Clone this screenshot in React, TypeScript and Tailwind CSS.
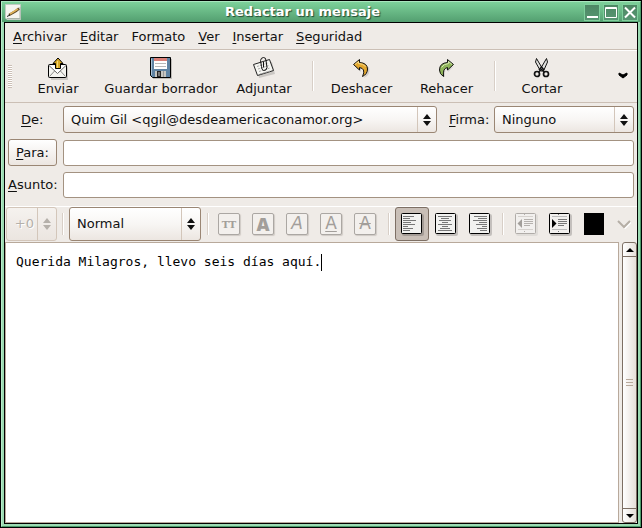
import type { ReactNode } from "react";

type IconProps = { children: ReactNode; w?: number; h?: number };

function Svg({ children, w = 24, h = 24 }: IconProps) {
  return (
    <svg width={w} height={h} viewBox={`0 0 ${w} ${h}`} fill="none" aria-hidden="true" className="shrink-0">
      {children}
    </svg>
  );
}

const SendIcon = () => (
  <Svg>
    <path d="M5 9H21L22 11V23H5Z" fill="#000" opacity=".15" />
    <rect x="2.500" y="7.500" width="18" height="13" rx="1" fill="#f4f4f0" stroke="#000" />
    <path d="M3.500 19.500L9 13.500M19.500 19.500L14 13.500" stroke="#8a8a88" />
    <path d="M3 8.500L11.500 16.500L20 8.500" stroke="#666" fill="#fff" />
    <path d="M12 1L17 6.500H14.500V11.500H9.500V6.500H7Z" fill="#d9a825" stroke="#000" />
    <path d="M11.500 4V11" stroke="#f5d873" />
  </Svg>
);

const FloppyIcon = () => (
  <Svg>
    <path d="M3 2H23V22H4Z" fill="#000" opacity=".2" />
    <path d="M1.500 .500H21.500V20.500H3.500L1.500 18.500Z" fill="#5f83a3" stroke="#000" />
    <path d="M2.500 1.500V18" stroke="#a9c2d6" />
    <rect x="5" y="1" width="13" height="11" fill="#fff" />
    <rect x="5" y="1" width="13" height="3" fill="#d98078" />
    <path d="M6 6.500H17M6 9.500H17" stroke="#b8b8b8" />
    <rect x="6" y="14" width="11" height="6" fill="#c6c6c2" />
    <rect x="8.500" y="14.500" width="3" height="5" fill="#777" stroke="#262626" />
    <path d="M14.500 14V20" stroke="#999" />
  </Svg>
);

const AttachIcon = () => (
  <Svg>
    <path d="M5 9L20 5L23 17L7 21Z" fill="#000" opacity=".15" />
    <path d="M1.500 7.500L17.500 2.500L21.500 13.500L5.500 18.500Z" fill="#f6f6f2" stroke="#222" strokeLinejoin="round" />
    <path d="M5 9.500L16 6M6 12L17 8.500M7 14.500L18 11M8 17L18 14" stroke="#aaa" strokeDasharray="2 1" />
    <path d="M9.500 9.500L8.500 3.500Q9 .500 11.500 .500T14 3.500L15 10.500Q14.500 14 11.500 13.500Q9.500 13 9.500 9.500M11.500 5V10.500" stroke="#111" />
  </Svg>
);

const UndoIcon = () => (
  <Svg>
    <path d="M6 11L11 15V11Q18 11 14 21Q21 18 19 10" fill="#000" opacity=".12" />
    <path d="M3.500 7.500L9.500 2.500V5.500Q17.500 6 17.500 12Q17.500 17 12.500 19.500Q14.500 15.500 13.500 13Q12.500 11 9.500 10.500V13Z" fill="#e3a72e" stroke="#111" />
    <path d="M5 7.500L8.500 4.500V6.500Q13 6.500 15.500 9.500" stroke="#f9dc8b" />
  </Svg>
);

const RedoIcon = () => (
  <Svg>
    <path d="M19 9L13 15V11Q9 13 10 20Q7 20 6 16" fill="#000" opacity=".12" />
    <path d="M18.500 7.500L12.500 2.500V5.500Q4.500 6 4.500 13Q4.500 17 8.500 19.500Q8 15.500 9 13Q10 11 12.500 10.500V13Z" fill="#8fb55a" stroke="#111" />
    <path d="M17 7.500L13.500 4.500V6.500Q8.500 7 6.500 10.500" stroke="#d5e8b0" />
  </Svg>
);

const CutIcon = () => (
  <Svg>
    <path d="M6.500 1.500L5.500 5L10.500 14H13.500L17.500 5L16.500 1.500L11.500 10Z" fill="#e2e2e0" stroke="#111" />
    <path d="M9 13L11.500 10L14 13" stroke="#111" strokeWidth="1.500" />
    <circle cx="7" cy="17" r="2.500" stroke="#111" strokeWidth="1.700" />
    <circle cx="16" cy="17" r="2.500" stroke="#111" strokeWidth="1.700" />
    <path d="M8.500 15L11.500 12.500L14.500 15" stroke="#111" strokeWidth="1.500" />
  </Svg>
);

const ComposeIcon = () => (
  <Svg w={16} h={16}>
    <path d="M.500 .500H15.500V15.500H2L.500 14Z" fill="#f5f5f0" stroke="#c3cdc4" />
    <path d="M2 14.500H15M15 3V15" stroke="#aab5ab" />
    <path d="M4 11L11 7L14 4.500" stroke="#5a4522" strokeWidth="2.500" />
    <path d="M5 10L13 5" stroke="#dfb35a" strokeWidth="1.500" />
    <path d="M2 12.500L5 11" stroke="#222" />
  </Svg>
);

/** Pair of small triangles that marks a drop-down or a spinner. */
function UpDown({ color = "#111" }: { color?: string }) {
  return (
    <Svg w={8} h={12}>
      <path d="M0 5H8L4 0ZM0 7H8L4 12Z" fill={color} />
    </Svg>
  );
}

type SelectProps = { id: string; value: string; className: string; label?: string };

function Select({ id, value, className, label }: SelectProps) {
  return (
    <div className={`relative ${className}`}>
      <select
        id={id}
        aria-label={label}
        className="h-full w-full appearance-none rounded-[3px] border border-[#9a8674] bg-linear-to-b from-white via-[#f8f6f4] to-[#ece6e1] pr-6 pl-[7px] text-[13px] text-[#111] outline-none"
      >
        <option>{value}</option>
      </select>
      <span className="pointer-events-none absolute inset-y-px right-px flex w-[19px] items-center justify-center border-l border-[#d3c6ba]">
        <UpDown />
      </span>
    </div>
  );
}

const Separator = ({ className }: { className: string }) => (
  <span className={`w-[2px] shrink-0 border-r border-l border-r-white border-l-[#d8cfc7] ${className}`} />
);

/** Text with its keyboard shortcut letter underlined. */
function Mnemonic({ text, at = 0 }: { text: string; at?: number }) {
  return (
    <>
      {text.slice(0, at)}
      <span className="underline decoration-1 underline-offset-2">{text[at]}</span>
      {text.slice(at + 1)}
    </>
  );
}

const menus = [
  { text: "Archivar", at: 0 },
  { text: "Editar", at: 0 },
  { text: "Formato", at: 3 },
  { text: "Ver", at: 0 },
  { text: "Insertar", at: 0 },
  { text: "Seguridad", at: 0 },
];

function ToolButton({ label, icon, className }: { label: string; icon: ReactNode; className: string }) {
  return (
    <button type="button" className={`flex shrink-0 flex-col items-center whitespace-nowrap ${className}`}>
      {icon}
      <span className="leading-[16px]">{label}</span>
    </button>
  );
}

function StyleButton({ name, children, className }: { name: string; children: ReactNode; className: string }) {
  return (
    <button type="button" aria-label={name} className="flex h-[34px] w-[34px] items-center justify-center">
      <span
        className={`flex size-[22px] items-center justify-center rounded-[2px] border border-[#aba7a3] bg-[#f3f0ed] text-[#a29e9a] shadow-[1px_1px_1px_#cfcac5] ${className}`}
      >
        {children}
      </span>
    </button>
  );
}

const alignLines: Record<string, string> = {
  left: "M3 3.500H14M3 5.500H10M3 7.500H16M3 9.500H11M3 11.500H15M3 13.500H8M3 15.500H13M3 17.500H10",
  center: "M4 3.500H18M7 5.500H15M5 7.500H17M8 9.500H14M4 11.500H18M8 13.500H14M6 15.500H16M4 17.500H18",
  right: "M6 3.500H19M10 5.500H19M5 7.500H19M11 9.500H19M8 11.500H19M14 13.500H19M9 15.500H19M12 17.500H19",
};

function AlignButton({ name, kind, pressed = false }: { name: string; kind: string; pressed?: boolean }) {
  return (
    <button
      type="button"
      aria-label={name}
      aria-pressed={pressed}
      className={`flex h-[34px] w-[34px] items-center justify-center rounded-[3px] ${
        pressed ? "border border-[#7d6f64] bg-[#c9bfb7]" : ""
      }`}
    >
      <Svg w={24} h={24}>
        <rect x="2" y="2" width="22" height="22" rx="2" fill="#000" opacity=".18" />
        <rect x="1.500" y="1.500" width="20" height="20" rx="1" fill="#f2f2f0" stroke="#000" />
        <path transform="translate(0 1)" d={alignLines[kind]} stroke="#777" />
      </Svg>
    </button>
  );
}

function IndentButton({ name, disabled = false }: { name: string; disabled?: boolean }) {
  const line = disabled ? "#b5b1ad" : "#777";
  return (
    <button type="button" aria-label={name} disabled={disabled} className="flex h-[34px] w-[34px] items-center justify-center">
      <Svg w={24} h={24}>
        <rect x="2" y="2" width="22" height="22" rx="2" fill="#000" opacity={disabled ? 0.06 : 0.18} />
        <rect x="1.500" y="1.500" width="20" height="20" rx="1" fill="#f2f0ee" stroke={disabled ? "#b0aca8" : "#000"} />
        <path d="M4 4.500H19M4 17.500H19" stroke={disabled ? "#d6d2ce" : "#bbb"} />
        <path d="M10 7.500H19M10 9.500H19M10 11.500H19M10 13.500H16" stroke={line} />
        <path d={disabled ? "M8 7V16L3.500 11.500Z" : "M4 7V16L8.500 11.500Z"} fill={disabled ? "#a29e9a" : "#000"} />
        <path d="M10 2.500H11M10 19.500H11" stroke={line} />
      </Svg>
    </button>
  );
}

function WindowButton({ name, children }: { name: string; children: ReactNode }) {
  return (
    <button
      type="button"
      aria-label={name}
      className="flex h-[17px] w-[16px] items-center justify-center border border-[#7fcf9c] bg-linear-to-b from-[#4d8764] to-[#579672]"
    >
      <Svg w={14} h={15}>{children}</Svg>
    </button>
  );
}

const field = "h-[26px] min-w-0 flex-1 rounded-[3px] border border-[#a39281] bg-white px-2 outline-none";

export default function App() {
  return (
    <div className="h-screen border border-black font-['DejaVu_Sans','Bitstream_Vera_Sans',sans-serif] text-[13px] text-[#111]">
      <div className="flex h-full flex-col border border-t-[#a9e6be] border-r-[#4b9a69] border-b-[#4b9a69] border-l-[#b8ecca] bg-[#9bdab2]">
        <header className="flex h-[20px] shrink-0 items-center bg-linear-to-b from-[#7dd19a] to-[#539f70] pr-[2px] pl-[3px]">
          <ComposeIcon />
          <h1 className="flex-1 text-center text-[13px] leading-[18px] font-bold text-white [text-shadow:1px_1px_1px_#234a33]">
            Redactar un mensaje
          </h1>
          <div className="flex gap-[3px]">
            <WindowButton name="Minimizar">
              <path d="M2 12H13" stroke="#fff" strokeWidth="2" />
            </WindowButton>
            <WindowButton name="Maximizar">
              <path d="M1.500 2.500H12.500V12.500H1.500ZM1 3.500H13" stroke="#fff" />
            </WindowButton>
            <WindowButton name="Cerrar">
              <path d="M2 2.500L12 12.500M12 2.500L2 12.500" stroke="#fff" strokeWidth="2" />
            </WindowButton>
          </div>
        </header>

        <main className="mx-[2px] mb-[2px] flex min-h-0 flex-1 flex-col border border-black bg-[#efebe7]">
          <nav className="flex h-[27px] shrink-0 items-center gap-[13px] border-b border-[#cbbfb5] px-2 pt-px">
            {menus.map((m) => (
              <button key={m.text} type="button">
                <Mnemonic text={m.text} at={m.at} />
              </button>
            ))}
          </nav>

          <div role="toolbar" aria-label="Principal" className="flex h-[53px] shrink-0 items-start border-t border-b border-t-white border-b-[#cbbfb5] pt-[6px] pl-[3px]">
            <span className="mt-[8px] mr-[5px] h-[23px] w-[4px] shrink-0 bg-[repeating-linear-gradient(to_bottom,#cbbfb5_0_1px,#fff_1px_2px)]" />
            <ToolButton label="Enviar" icon={<SendIcon />} className="w-[82px]" />
            <ToolButton label="Guardar borrador" icon={<FloppyIcon />} className="w-[124px]" />
            <ToolButton label="Adjuntar" icon={<AttachIcon />} className="w-[82px]" />
            <Separator className="mt-[4px] mr-[5px] ml-[7px] h-[30px]" />
            <ToolButton label="Deshacer" icon={<UndoIcon />} className="w-[85px]" />
            <ToolButton label="Rehacer" icon={<RedoIcon />} className="w-[85px]" />
            <Separator className="mx-[5px] mt-[4px] h-[30px]" />
            <ToolButton label="Cortar" icon={<CutIcon />} className="w-[82px]" />
            <button type="button" aria-label="Más herramientas" className="mt-[14px] mr-[9px] ml-auto">
              <Svg w={10} h={8}>
                <path d="M1 2V4L5 7L9 4V2L5 4Z" fill="#000" stroke="#000" />
              </Svg>
            </button>
          </div>

          <div className="shrink-0 pr-[3px] pl-[3px]">
            <div className="flex items-center pt-[3px]">
              <label htmlFor="de" className="w-[55px] pl-[13px]">
                <Mnemonic text="De:" />
              </label>
              <Select id="de" value="Quim Gil <qgil@desdeamericaconamor.org>" className="h-[27px] min-w-0 flex-1" />
              <label htmlFor="firma" className="w-[57px] pl-[12px]">
                <Mnemonic text="Firma:" />
              </label>
              <Select id="firma" value="Ninguno" className="h-[27px] w-[140px]" />
            </div>
            <div className="flex items-center pt-[6px]">
              <button
                type="button"
                className="mr-[6px] h-[27px] w-[49px] rounded-[3px] border border-[#9a8674] bg-linear-to-b from-white to-[#ece6e1]"
              >
                <Mnemonic text="Para:" />
              </button>
              <input aria-label="Para" className={field} />
            </div>
            <div className="flex items-center pt-[6px]">
              <label htmlFor="asunto" className="w-[55px]">
                <Mnemonic text="Asunto:" />
              </label>
              <input id="asunto" className={field} />
            </div>
          </div>

          <div role="toolbar" aria-label="Formato" className="mt-2 flex h-[36px] shrink-0 items-start border-t border-white pl-px">
            <div className="flex h-[34px] w-[51px] shrink-0 rounded-[3px] border border-[#d3c6ba] bg-linear-to-b from-[#f5f2ef] to-[#ebe5e0] text-[#b5b0aa]">
              <span className="flex flex-1 items-center justify-end pr-[3px] [text-shadow:1px_1px_0_#fff]">+0</span>
              <span className="flex w-[19px] items-center justify-center border-l border-[#d3c6ba]">
                <UpDown color="#b5b0aa" />
              </span>
            </div>
            <Separator className="mx-[5px] mt-[6px] h-[22px]" />
            <Select id="estilo" label="Estilo de párrafo" value="Normal" className="h-[34px] w-[132px] shrink-0" />
            <Separator className="mt-[6px] mr-[3px] ml-[6px] h-[22px]" />
            <StyleButton name="Mecanografiado" className="font-['DejaVu_Serif',serif] text-[10px] font-bold">
              TT
            </StyleButton>
            <StyleButton name="Negrita" className="font-['Open_Sans','DejaVu_Sans',sans-serif] text-[18px] font-extrabold">
              A
            </StyleButton>
            <StyleButton name="Cursiva" className="text-[17px] italic">
              A
            </StyleButton>
            <StyleButton name="Subrayado" className="text-[17px] underline decoration-1 underline-offset-2">
              A
            </StyleButton>
            <StyleButton name="Tachado" className="text-[17px] line-through decoration-1">
              A
            </StyleButton>
            <Separator className="mt-[6px] mr-[5px] ml-[6px] h-[22px]" />
            <AlignButton name="Izquierda" kind="left" pressed />
            <AlignButton name="Centro" kind="center" />
            <AlignButton name="Derecha" kind="right" />
            <Separator className="mx-[5px] mt-[6px] h-[22px]" />
            <IndentButton name="Reducir sangría" disabled />
            <IndentButton name="Aumentar sangría" />
            <button type="button" aria-label="Color del texto" className="mt-[6px] ml-[7px] h-[22px] w-[20px] bg-black" />
            <button type="button" aria-label="Elegir color" className="mt-[12px] mr-[6px] ml-auto">
              <Svg w={14} h={10}>
                <path d="M2 3L8 9L14 3" stroke="#fff" strokeWidth="2" />
                <path d="M1 2L7 8L13 2" stroke="#b5aea5" strokeWidth="2" />
              </Svg>
            </button>
          </div>

          <div className="flex min-h-0 flex-1">
            <div
              role="textbox"
              aria-multiline="true"
              aria-label="Mensaje"
              className="flex-1 border border-[#b8a99b] bg-white px-[10px] pt-[11px] font-['DejaVu_Sans_Mono',monospace] text-[13px] leading-4 text-black"
            >
              <span className="inline-block h-[17px] border-r border-black">Querida Milagros, llevo seis días aquí.</span>
            </div>
            <div className="ml-[3px] flex w-[15px] flex-col rounded-[3px] border border-[#7d6f64] bg-linear-to-r from-white to-[#e6dfd9]">
              <button type="button" aria-label="Subir" className="flex h-[14px] items-center justify-center border-b border-[#7d6f64]">
                <Svg w={8} h={4}>
                  <path d="M0 4H8L4 0Z" fill="#000" />
                </Svg>
              </button>
              <div className="flex flex-1 flex-col items-center justify-center gap-[2px]">
                <span className="h-px w-[7px] bg-[#b8a99b]" />
                <span className="h-px w-[7px] bg-[#b8a99b]" />
                <span className="h-px w-[7px] bg-[#b8a99b]" />
              </div>
              <button type="button" aria-label="Bajar" className="flex h-[14px] items-center justify-center border-t border-[#7d6f64]">
                <Svg w={8} h={4}>
                  <path d="M0 0H8L4 4Z" fill="#000" />
                </Svg>
              </button>
            </div>
          </div>
        </main>
      </div>
    </div>
  );
}
